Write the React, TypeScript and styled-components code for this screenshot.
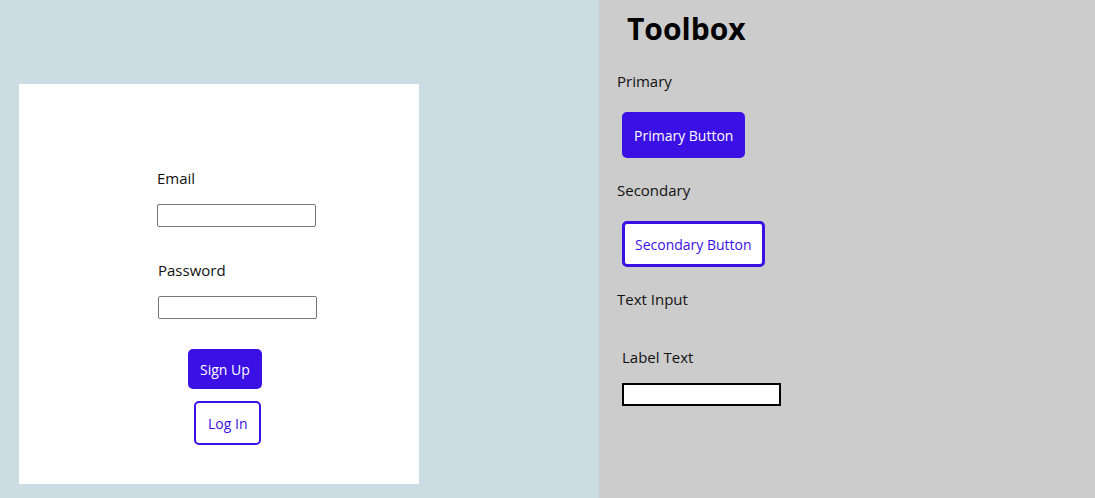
import React from "react";
import styled, { createGlobalStyle } from "styled-components";

const GlobalStyle = createGlobalStyle`
  html, body {
    margin: 0;
    padding: 0;
    font-family: "Open Sans", "Noto Sans", sans-serif;
  }
`;

const Page = styled.div`
  display: flex;
  width: 1095px;
  height: 498px;
  overflow: hidden;
`;

const Stage = styled.div`
  width: 599px;
  flex-shrink: 0;
  background: #cbdde3;
  padding: 84px 0 0 19px;
  box-sizing: border-box;
`;

const Card = styled.div`
  width: 400px;
  height: 400px;
  background: #ffffff;
  box-sizing: border-box;
  padding: 84px 0 0 138px;
  display: flex;
  flex-direction: column;
  align-items: flex-start;
`;

const Field = styled.div<{ $shift?: number; $gap?: number }>`
  display: flex;
  flex-direction: column;
  align-items: flex-start;
  margin-left: ${(p) => p.$shift ?? 0}px;
  margin-top: ${(p) => p.$gap ?? 0}px;
`;

const Label = styled.label`
  font-size: 15px;
  line-height: 21px;
  color: #111;
`;

const Input = styled.input<{ $strong?: boolean }>`
  width: 159px;
  height: 23px;
  box-sizing: border-box;
  margin-top: 15px;
  border: ${(p) => (p.$strong ? "2px solid #000" : "1px solid #767676")};
  border-radius: ${(p) => (p.$strong ? "0" : "2px")};
  background: #fff;
  padding: 0 4px;
`;

const Button = styled.button<{ $variant: "primary" | "secondary"; $size?: "sm" | "md" }>`
  font-family: inherit;
  font-size: 14px;
  box-sizing: border-box;
  cursor: pointer;
  border-radius: 5px;
  padding: 0 ${(p) => (p.$variant === "secondary" && p.$size !== "sm" ? 10 : 12)}px;
  background: ${(p) => (p.$variant === "primary" ? "#3a10e5" : "#ffffff")};
  color: ${(p) => (p.$variant === "primary" ? "#ffffff" : "#3a10e5")};
  border: ${(p) =>
    p.$variant === "primary" ? "none" : p.$size === "sm" ? "2px solid #3a10e5" : "3px solid #3a10e5"};
  height: ${(p) => (p.$size === "sm" ? (p.$variant === "primary" ? 40 : 44) : 46)}px;
`;

const ButtonSlot = styled.div<{ $shift: number; $gap: number }>`
  margin-left: ${(p) => p.$shift}px;
  margin-top: ${(p) => p.$gap}px;
  display: flex;
`;

const Toolbox = styled.aside`
  flex: 1;
  background: #cccccc;
  padding: 10px 0 0 18px;
  display: flex;
  flex-direction: column;
  align-items: flex-start;
`;

const Heading = styled.h1`
  margin: 0 0 0 10px;
  font-size: 30px;
  line-height: 38px;
  font-weight: 700;
  color: #000;
`;

const SectionTitle = styled.div<{ $gap: number }>`
  font-size: 15px;
  line-height: 21px;
  color: #111;
  margin-top: ${(p) => p.$gap}px;
`;

const Indent = styled.div<{ $gap: number }>`
  margin: ${(p) => p.$gap}px 0 0 5px;
  display: flex;
  flex-direction: column;
  align-items: flex-start;
`;

export default function App() {
  return (
    <>
      <GlobalStyle />
      <Page>
        <Stage>
          <Card>
            <Field>
              <Label>Email</Label>
              <Input type="email" />
            </Field>
            <Field $shift={1} $gap={33}>
              <Label>Password</Label>
              <Input type="password" />
            </Field>
            <ButtonSlot $shift={31} $gap={30}>
              <Button $variant="primary" $size="sm">Sign Up</Button>
            </ButtonSlot>
            <ButtonSlot $shift={37} $gap={12}>
              <Button $variant="secondary" $size="sm">Log In</Button>
            </ButtonSlot>
          </Card>
        </Stage>
        <Toolbox>
          <Heading>Toolbox</Heading>
          <SectionTitle $gap={23}>Primary</SectionTitle>
          <Indent $gap={20}>
            <Button $variant="primary">Primary Button</Button>
          </Indent>
          <SectionTitle $gap={22}>Secondary</SectionTitle>
          <Indent $gap={20}>
            <Button $variant="secondary">Secondary Button</Button>
          </Indent>
          <SectionTitle $gap={22}>Text Input</SectionTitle>
          <Indent $gap={37}>
            <Label>Label Text</Label>
            <Input $strong />
          </Indent>
        </Toolbox>
      </Page>
    </>
  );
}
